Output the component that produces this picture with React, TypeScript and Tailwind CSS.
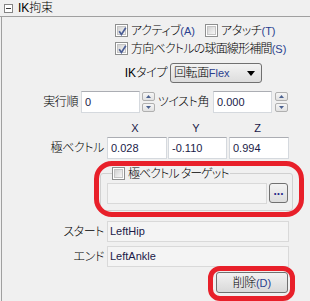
import React from "react";

const FONT = "font-['Liberation_Sans','Noto_Sans_CJK_JP',sans-serif] [font-feature-settings:'palt'] font-light";

function Check({ checked }: { checked?: boolean }) {
  return (
    <span className="relative block w-[13px] h-[13px] border border-[#8e8f8f] bg-white p-px shrink-0">
      <span className="block w-full h-full border border-[#c4c4c4] bg-gradient-to-br from-[#d2d2d2] to-[#f7f7f7]" />
      {checked && (
        <svg className="absolute left-0 top-0" width="13" height="13" viewBox="0 0 13 13">
          <path d="M3.2 6.3 L5.4 9.4 L9.8 2.8" stroke="#4a5d95" strokeWidth="1.7" fill="none" strokeLinejoin="miter" />
        </svg>
      )}
    </span>
  );
}

function Lat({ children }: { children: React.ReactNode }) {
  return <span className="text-[11px] font-normal tracking-normal text-[#2a3f8f]">{children}</span>;
}

function Input({ value, w }: { value: string; w: string }) {
  return (
    <div className={`${w} h-[22px] bg-white border border-[#d5d9de] border-t-[#abadb3] flex items-center pl-[3px] text-[11px] font-normal tracking-normal text-[#1a1a48]`}>
      {value}
    </div>
  );
}

function Field({ value, w, h = "h-[21px]" }: { value: string; w: string; h?: string }) {
  return (
    <div className={`${w} ${h} bg-[#f4f4f4] border border-[#d9d9d9] flex items-center pl-[2px] text-[11px] font-normal tracking-normal text-[#1a1a48]`}>
      {value}
    </div>
  );
}

function Spin() {
  const btn = "w-[13px] h-[9px] border border-[#b0b0b0] rounded-[2px] bg-gradient-to-b from-[#f6f6f6] to-[#e2e2e2] flex items-center justify-center";
  return (
    <div className="h-[22px] flex flex-col justify-between py-px">
      <div className={btn}>
        <svg width="5" height="3" viewBox="0 0 5 3"><path d="M0 3 L2.5 0 L5 3 Z" fill="#4c6290" /></svg>
      </div>
      <div className={btn}>
        <svg width="5" height="3" viewBox="0 0 5 3"><path d="M0 0 L2.5 3 L5 0 Z" fill="#4c6290" /></svg>
      </div>
    </div>
  );
}

export default function App() {
  return (
    <div className={`relative w-[310px] h-[301px] bg-[#f0f0f0] overflow-hidden text-[12px] leading-none tracking-[-0.4px] text-black ${FONT}`}>
      {/* header */}
      <div className="h-[17px] flex items-center border-b border-[#a0a0a0]">
        <span className="ml-[4px] w-[9px] h-[9px] border border-[#848484] bg-white flex items-center justify-center">
          <span className="w-[5px] h-px bg-[#3a3a3a]" />
        </span>
        <span className="ml-[5px]">
          <span className="text-[12px] font-normal tracking-normal">IK</span>拘束
        </span>
      </div>

      <div className="ml-[1px] border-l border-[#a0a0a0] h-[284px] flex flex-col">
        {/* row1 */}
        <div className="mt-[7px] h-[13px] flex items-center ml-[113px]">
          <div className="w-[90px] flex items-center gap-[3px]">
            <Check checked />
            <span>アクティブ<Lat>(A)</Lat></span>
          </div>
          <div className="flex items-center gap-[3px]">
            <Check />
            <span>アタッチ<Lat>(T)</Lat></span>
          </div>
        </div>
        {/* row2 */}
        <div className="mt-[5px] h-[13px] flex items-center gap-[3px] ml-[113px]">
          <Check checked />
          <span className="tracking-[-0.8px]">方向ベクトルの球面線形補間<Lat>(S)</Lat></span>
        </div>
        {/* row3 */}
        <div className="mt-[8px] h-[20px] flex items-center">
          <span className="w-[165px] text-right">
            <span className="text-[12px] font-normal tracking-normal">IK</span>タイプ
          </span>
          <div className="ml-[3px] w-[92px] h-[20px] rounded-[3px] border border-[#707070] bg-gradient-to-b from-[#f3f3f3] to-[#dddddd] flex items-center pl-[3px] pr-[6px]">
            <span>回転面<Lat>Flex</Lat></span>
            <svg className="ml-auto" width="8" height="5" viewBox="0 0 8 5"><path d="M0 0 L8 0 L4 5 Z" fill="#000" /></svg>
          </div>
        </div>
        {/* row4 */}
        <div className="mt-[8px] h-[22px] flex items-center">
          <span className="w-[76px] text-right">実行順</span>
          <div className="ml-[3px]"><Input value="0" w="w-[59px]" /></div>
          <div className="ml-[2px]"><Spin /></div>
          <span className="w-[54px] text-right">ツイスト角</span>
          <div className="ml-[4px]"><Input value="0.000" w="w-[59px]" /></div>
          <div className="ml-[3px]"><Spin /></div>
        </div>
        {/* row5 */}
        <div className="mt-[8px] h-[14px] flex items-center ml-[105px] text-[11px] font-normal tracking-normal text-[#1a1a48]">
          <span className="w-[60px] text-center pr-[4px]">X</span>
          <span className="ml-px w-[59px] text-center pr-[3px]">Y</span>
          <span className="ml-[2px] w-[60px] text-center pr-[3px]">Z</span>
        </div>
        {/* row6 */}
        <div className="mt-[2px] h-[22px] flex items-center">
          <span className="w-[102px] text-right">極ベクトル</span>
          <div className="ml-[3px]"><Input value="0.028" w="w-[60px]" /></div>
          <div className="ml-px"><Input value="-0.110" w="w-[59px]" /></div>
          <div className="ml-[2px]"><Input value="0.994" w="w-[60px]" /></div>
        </div>
        {/* group box */}
        <div className="relative mt-[14px] ml-[98px] w-[193px] border border-[#d0d0d0] rounded-[3px] pt-[9px] pl-[6px] pr-[4px] pb-[6px] flex items-start">
          <div className="absolute left-[11px] top-[-7px] bg-[#f0f0f0] pr-[2px] flex items-center gap-[3px] h-[13px]">
            <Check />
            <span className="tracking-[-1px]">極ベクトル ターゲット</span>
          </div>
          <Field value="" w="w-[160px]" />
          <div className="ml-[2px] w-[19px] h-[20px] rounded-[3px] border border-[#707070] bg-gradient-to-b from-[#f3f3f3] to-[#dddddd] flex items-end justify-center pb-[5px]">
            <span className="text-[12px] font-bold leading-none text-[#2a2a8a] tracking-[0px]">...</span>
          </div>
        </div>
        {/* start */}
        <div className="mt-[10px] h-[21px] flex items-center">
          <span className="w-[102px] text-right">スタート</span>
          <div className="ml-[3px]"><Field value="LeftHip" w="w-[182px]" /></div>
        </div>
        {/* end */}
        <div className="mt-[4px] h-[21px] flex items-center">
          <span className="w-[102px] text-right">エンド</span>
          <div className="ml-[3px]"><Field value="LeftAnkle" w="w-[182px]" /></div>
        </div>
        {/* delete button */}
        <div className="mt-[5px] ml-[214px] w-[72px] h-[21px] rounded-[3px] border border-[#707070] bg-gradient-to-b from-[#f2f2f2] to-[#d9d9d9] flex items-center justify-center">
          <span>削除<Lat>(D)</Lat></span>
        </div>
      </div>

      {/* red annotations */}
      <div className="absolute left-[94px] top-[161px] w-[210px] h-[56px] border-[5px] border-[#e8202a] rounded-[18px]" />
      <div className="absolute left-[208px] top-[266px] w-[87px] h-[35px] border-[5px] border-[#e8202a] rounded-[12px]" />
    </div>
  );
}
